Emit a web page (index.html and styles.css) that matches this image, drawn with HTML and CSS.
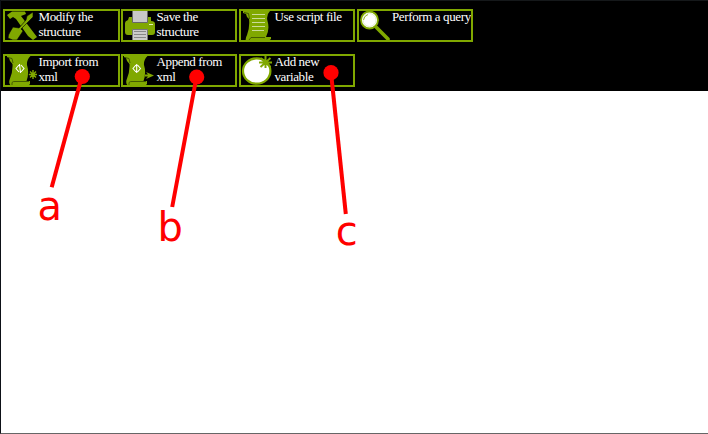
FILE: index.html
```html
<!DOCTYPE html>
<html lang="en">
<head>
<meta charset="utf-8">
<title>Structure tools</title>
<link rel="stylesheet" href="styles.css">
</head>
<body>
<svg class="defs" aria-hidden="true">
  <symbol id="scroll" viewBox="0 0 32 30">
    <path fill="#80a800" d="M2 0H25.500Q21.500 4 22 9Q24.500 17 21.500 25H25V28Q24 29.500 22 29.500H6Q3.500 28 4.500 24Q8 16 7.500 8L5 5L4 2L2 1Z"/>
    <path fill="none" stroke="#354700" stroke-width=".8" d="M3 1.500L7 2.500L8 7M7 29V26.500Q8 25.300 10 25.500H24"/>
  </symbol>
</svg>
<main class="window">
  <nav class="toolbar">
    <div class="row">
      <div class="tool wide">
        <svg class="icon" viewBox="0 0 32 30"><g fill="#80a800"><path d="M2 4L7 .5H20L21 3L16 5L32 26L28 29L23 25L11 8L8 6L5 8Z"/><path stroke="#000" stroke-width=".6" d="M28 1L28 6L24 10L16 18L18 20L12 29Q8 30 3 27Q3 24 5 21L8 16L14 17L21 9L22 5Z"/></g></svg>
        <span class="label">Modify the structure</span>
      </div>
      <div class="tool">
        <svg class="icon" viewBox="0 0 32 30"><path fill="#80a800" d="M6 6H28V10Q32 10 32 13V21Q32 24 29 24H5Q2 24 2 21V12Q2 10 5 9Z"/><path fill="#c8c8c8" stroke="#666" d="M9.500 -.5H24.500V11.500H9.500Z"/><path fill="#ccc" stroke="#777" d="M9.500 18.500H24.500V29.500H9.500Z"/><path stroke="#888" d="M11 20.500H23M11 23.500H23M11 26.500H23"/><path stroke="#e2efbd" d="M26 13.500H30"/></svg>
        <span class="label">Save the structure</span>
      </div>
      <div class="tool">
        <svg class="icon" viewBox="0 0 32 30"><path fill="#80a800" d="M2 0H29Q25 4 26.500 10Q29 18 25 26H30V28L28 29.500H5Q4 28 6 24Q9 16 8 8L6 6L5 3L2 2Z"/><path fill="none" stroke="#354700" stroke-width=".8" d="M3 1.500L7.500 2.500L8.500 8M8 29L10 26.500H24"/><path stroke="#cadb99" d="M11 3.500H24M11 7.500H24M11 11.500H24M11 15.500H24M11 19.500H23"/></svg>
        <span class="label">Use script file</span>
      </div>
      <div class="tool">
        <svg class="icon" viewBox="0 0 32 30"><path stroke="#80a800" stroke-width="3.600" stroke-linecap="round" d="M17 16L29 28"/><circle cx="10.500" cy="9" r="8.500" fill="#fff" stroke="#80a800" stroke-width="1.800"/><circle cx="10.500" cy="9" r="6.500" fill="none" stroke="#dce9c0" stroke-width=".8"/><path fill="none" stroke="#80a800" stroke-width=".8" d="M4.500 9Q5 5 9 3.500"/></svg>
        <span class="label query">Perform a query</span>
      </div>
    </div>
    <div class="row">
      <div class="tool wide">
        <svg class="icon" viewBox="0 0 32 30"><use href="#scroll" width="32" height="30"/><path fill="none" stroke="#fff" stroke-width="1.100" d="M14 9L11 12.500L14 16M16 9L19 12.500L16 16M14.500 8L15.500 17"/><path stroke="#80a800" stroke-width="1.400" d="M28 14V23M23.800 18.500H32.200M25 15.500L31 21.500M31 15.500L25 21.500"/></svg>
        <span class="label">Import from xml</span>
      </div>
      <div class="tool">
        <svg class="icon" viewBox="0 0 32 30"><use href="#scroll" x="-1" width="32" height="30"/><path fill="none" stroke="#fff" stroke-width="1.100" d="M13 9L10 12.500L13 16M14.500 9L17.500 12.500L14.500 16M13.700 8V17"/><path fill="#80a800" d="M22 18.500H25L23 16L31 19.500L23 23L25 20.500H22Z"/></svg>
        <span class="label">Append from xml</span>
      </div>
      <div class="tool">
        <svg class="icon" viewBox="0 0 32 30"><ellipse cx="15.700" cy="15" rx="13.700" ry="12.700" fill="#fff" stroke="#80a800" stroke-width="2.200"/><path stroke="#80a800" stroke-width="2" d="M24.500 0V12M18 6.500H31M19.500 2L29.500 11M29.500 2L19.500 11"/></svg>
        <span class="label">Add new variable</span>
      </div>
    </div>
  </nav>
</main>
<svg class="callouts" viewBox="0 0 708 434">
  <g stroke="#f00" stroke-width="4"><path d="M82 76L51.700 187.200"/><path d="M196.500 77L172.200 207"/><path d="M331 72.500L345.800 214"/></g>
  <g fill="#f00"><circle cx="82.300" cy="76.500" r="7.600"/><circle cx="196.700" cy="77" r="7.600"/><circle cx="331" cy="72.700" r="7.600"/>
  <text x="37.400" y="219.500">a</text><text x="157.400" y="240.500">b</text><text x="335.700" y="245.200">c</text></g>
</svg>
</body>
</html>
```
FILE: styles.css
```css
* { box-sizing: border-box; }
body { margin: 0; background: #fff; }
.defs { position: absolute; width: 0; height: 0; }
.window {
  height: 434px;
  border-left: 1px solid #0d1117;
  border-bottom: 1px solid #666;
  overflow: hidden;
}
.toolbar {
  height: 91px;
  display: flex;
  flex-direction: column;
  gap: 12px;
  padding: 8px 0 0 2px;
  background: #000;
  border-top: 1px solid #15181a;
}
.row {
  display: grid;
  grid-template-columns: repeat(4, 116px);
  gap: 2px;
}
.tool {
  display: flex;
  height: 33px;
  border: 2px solid #80a800;
  overflow: hidden;
}
.wide { width: 117px; }
.icon { flex: none; width: 32px; height: 30px; }
.label {
  margin: -2px 0 0 1.500px;
  color: #fff;
  font: 13px/15px "Liberation Serif", "Times New Roman", serif;
  letter-spacing: -0.38px;
  width: 78px;
}
.query { margin-left: 1px; white-space: nowrap; }
.callouts {
  position: absolute;
  top: 0;
  left: 0;
  width: 708px;
  height: 434px;
  pointer-events: none;
}
.callouts text { font: 40px "DejaVu Sans", sans-serif; }
```
